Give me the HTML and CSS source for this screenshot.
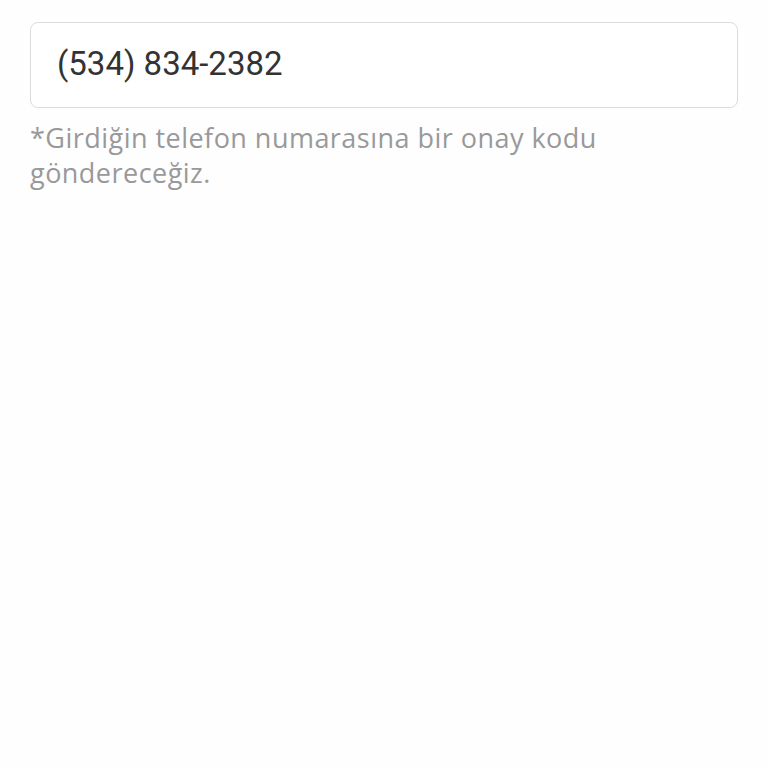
FILE: index.html
```html
<!DOCTYPE html>
<html lang="tr">
  <head>
    <meta charset="UTF-8" />
    <meta name="viewport" content="width=device-width, initial-scale=1.0" />
    <title>Telefon</title>
    <link rel="stylesheet" href="styles.css">
  </head>
  <body>
    <div class="form">
      <div class="phone-input">(534) 834-2382</div>
      <p class="hint">*Girdiğin telefon numarasına bir onay kodu göndereceğiz.</p>
    </div>
  </body>
</html>
```

FILE: styles.css
```css
body {
  margin: 0;
  background-color: #fefefe;
}
.form {
  padding: 22px 30px;
}
.phone-input {
  box-sizing: border-box;
  height: 86px;
  display: flex;
  align-items: center;
  padding: 0 26px 4px;
  border: 1.5px solid #dcdcdc;
  border-radius: 8px;
  background-color: #fff;
  font-family: Roboto, sans-serif;
  font-size: 33px;
  color: #333;
}
.hint {
  margin: 12px 0 0;
  font-family: "Open Sans", sans-serif;
  font-size: 27px;
  line-height: 35px;
  color: #999;
  letter-spacing: 0.47px;
  width: 630px;
}
```
